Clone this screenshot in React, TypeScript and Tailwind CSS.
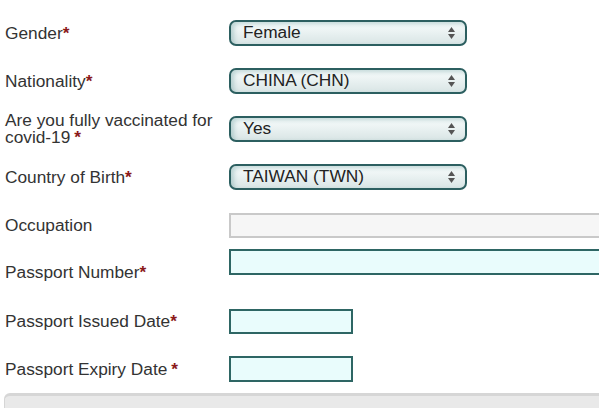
const Star = ({ gap = false }: { gap?: boolean }) => (
  <span className={`text-[#8b1a1a] font-bold ${gap ? "ml-1" : ""}`}>*</span>
);

function Select({ value }: { value: string }) {
  return (
    <div className="w-[238px] h-[26px] rounded-[7px] border-2 border-[#2c5f60] bg-gradient-to-b from-[#f8fcfc] via-[#e9f1f1] to-[#d9e5e5] shadow-[inset_3px_2px_4px_rgba(110,160,160,0.4)] flex items-center pl-[12px] pr-[9px]">
      <span className="flex-1 text-[17.3px] text-[#222] leading-none">{value}</span>
      <svg width="9" height="14" viewBox="0 0 9 14" className="text-[#555]">
        <path d="M4.5 1 L8 6 L1 6 Z" fill="currentColor" />
        <path d="M4.5 13 L8 8 L1 8 Z" fill="currentColor" />
      </svg>
    </div>
  );
}

function Row({
  label,
  children,
  end = false,
}: {
  label: React.ReactNode;
  children: React.ReactNode;
  end?: boolean;
}) {
  return (
    <div className={`flex h-[48px] ${end ? "items-start" : "items-center"}`}>
      <div
        className={`w-[224px] shrink-0 pr-1 text-[17.3px] leading-[17px] text-[#333] ${end ? "pt-[15px]" : ""}`}
      >
        {label}
      </div>
      <div className="flex-1 min-w-0">{children}</div>
    </div>
  );
}

export default function App() {
  return (
    <div className="w-[599px] h-[408px] overflow-hidden bg-white font-['Liberation_Sans',Arial,sans-serif] pl-[5px] pt-[9px]">
      <Row label={<>Gender<Star /></>}>
        <Select value="Female" />
      </Row>
      <Row label={<>Nationality<Star /></>}>
        <Select value="CHINA (CHN)" />
      </Row>
      <Row label={<>Are you fully vaccinated for covid-19<Star gap /></>}>
        <Select value="Yes" />
      </Row>
      <Row label={<>Country of Birth<Star /></>}>
        <Select value="TAIWAN (TWN)" />
      </Row>
      <Row label="Occupation">
        <div className="h-[25px] w-[400px] border-2 border-[#c9c9c9] bg-[#f6f6f6]" />
      </Row>
      <Row label={<>Passport Number<Star /></>} end>
        <div className="h-[26px] w-[400px] border-2 border-[#2e6664] bg-[#e9fcfc]" />
      </Row>
      <Row label={<>Passport Issued Date<Star /></>}>
        <div className="h-[25px] w-[124px] border-2 border-[#2e6664] bg-[#e9fcfc]" />
      </Row>
      <Row label={<>Passport Expiry Date<Star gap /></>}>
        <div className="h-[26px] w-[124px] border-2 border-[#2e6664] bg-[#e9fcfc]" />
      </Row>
      <div className="-ml-[1px] h-[20px] rounded-tl-[6px] border-t-[3px] border-l border-[#d6d6d6] bg-[#e9e9e9]" />
    </div>
  );
}
